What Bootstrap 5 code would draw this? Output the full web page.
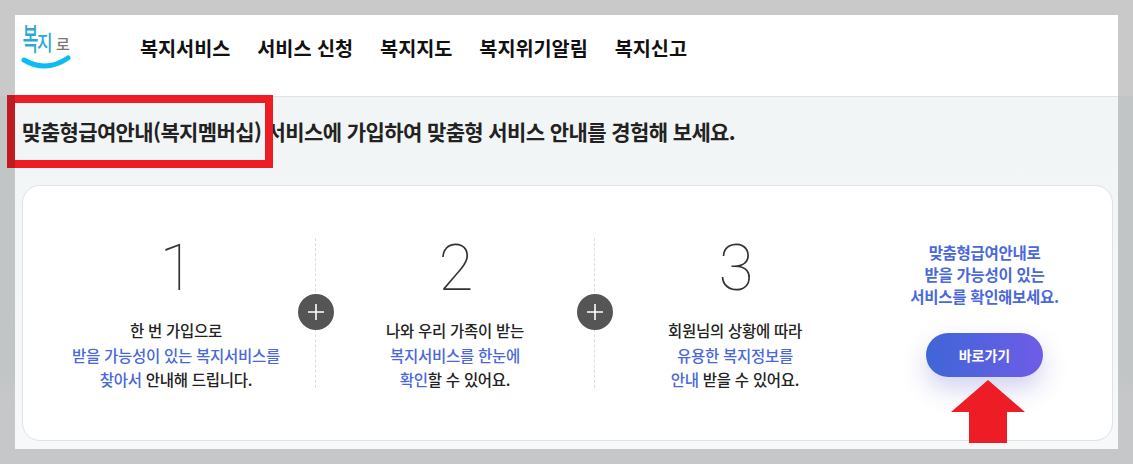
<!DOCTYPE html>
<html lang="ko">
<head>
<meta charset="utf-8">
<title>복지로</title>
<link href="https://cdn.jsdelivr.net/npm/bootstrap@5.3.0/dist/css/bootstrap.min.css" rel="stylesheet">
<style>
html,body{height:100%}
body{background:linear-gradient(#c9c9c9 0,#c9c9c9 96px,#c1c5c6 96px,#c1c5c6 370px,#c6c7c8 400px);font-family:"Noto Sans CJK KR","Noto Sans",sans-serif;padding:15px;overflow:hidden;position:relative}
.sheet{width:1103px;height:434px;background:linear-gradient(#f1f4f5,#f6f8f9)}
.topbar{height:82px;background:#fff;border-bottom:1px solid #dfe3e4;padding-left:125px;padding-top:17px}
.logo-box{position:absolute;left:19px;top:22px;width:58px;height:50px;overflow:visible}
.logo-box text{font-family:"Noto Sans CJK KR",sans-serif;font-weight:500}
.menu-link{font-size:19.7px;font-weight:700;color:#111;text-decoration:none;letter-spacing:-.05px;line-height:32px}
.menu-gap{gap:27px}
.headline{font-size:21px;font-weight:700;color:#222;letter-spacing:-.6px;margin:0;padding:19px 0 0 7px;line-height:30px;height:88px}
.panel{width:1091px;height:256px;margin-left:7px;background:#fff;border:1px solid #dfe3e4;border-radius:18px;display:grid;grid-template-columns:293px 279px 280px 1fr;padding-top:52px}
.step{height:150px;position:relative;border-right:1px dashed #dcdcdc;text-align:center;font-size:15.5px;font-weight:500;line-height:24.5px;color:#222;letter-spacing:-.28px}
.step:first-child{padding-left:14px}
.step-last{border-right:0}
.digit{font-family:Roboto,sans-serif;font-weight:100;font-size:64px;line-height:58px;color:#333;letter-spacing:0;margin-top:2px;margin-bottom:20px;padding-left:2px}
.accent{color:#4a68dc}
.joiner{position:absolute;right:-19px;top:56px;width:36px;height:36px;border-radius:50%;background:#555;display:flex;align-items:center;justify-content:center}
.promo{text-align:center;padding-top:3px;padding-right:18px;font-size:15.5px;font-weight:700;line-height:22px;color:#4a68dc;letter-spacing:-.3px}
.go-btn{display:block;margin:26px auto 0;width:117px;height:44px;line-height:44px;border:0;border-radius:22px;background:linear-gradient(90deg,#3f66d6,#6f5ce8);color:#fff;font-size:14px;font-weight:700;padding:0;box-shadow:0 12px 24px rgba(80,80,200,.25)}
.callout{position:absolute;left:7px;top:95px;width:266px;height:73px;border:8px solid #ee1c25}
.callout::before{content:"";position:absolute;left:-8px;top:-8px;width:8px;height:73px;background:#bf1a20}
.arrow-mark{position:absolute;left:951px;top:380px;width:74px;height:63px}
</style>
</head>
<body>
<div class="sheet">
  <header class="topbar">
    <nav class="d-flex menu-gap">
      <a class="menu-link" href="#">복지서비스</a>
      <a class="menu-link" href="#">서비스 신청</a>
      <a class="menu-link" href="#">복지지도</a>
      <a class="menu-link" href="#">복지위기알림</a>
      <a class="menu-link" href="#">복지신고</a>
    </nav>
  </header>
  <h1 class="headline">맞춤형급여안내(복지멤버십) 서비스에 가입하여 맞춤형 서비스 안내를 경험해 보세요.</h1>
  <section class="panel">
    <div class="step">
      <div class="digit">1</div>
      <div>한 번 가입으로</div>
      <div class="accent">받을 가능성이 있는 복지서비스를</div>
      <div><span class="accent">찾아서</span> 안내해 드립니다.</div>
      <span class="joiner"><svg width="18" height="18" viewBox="0 0 18 18"><path d="M9 1v16M1 9h16" stroke="#fff" stroke-width="1.6"/></svg></span>
    </div>
    <div class="step">
      <div class="digit">2</div>
      <div>나와 우리 가족이 받는</div>
      <div class="accent">복지서비스를 한눈에</div>
      <div><span class="accent">확인</span>할 수 있어요.</div>
      <span class="joiner"><svg width="18" height="18" viewBox="0 0 18 18"><path d="M9 1v16M1 9h16" stroke="#fff" stroke-width="1.6"/></svg></span>
    </div>
    <div class="step step-last">
      <div class="digit">3</div>
      <div>회원님의 상황에 따라</div>
      <div class="accent">유용한 복지정보를</div>
      <div><span class="accent">안내</span> 받을 수 있어요.</div>
    </div>
    <div class="promo">
      <div>맞춤형급여안내로</div>
      <div>받을 가능성이 있는</div>
      <div>서비스를 확인해보세요.</div>
      <button class="go-btn" type="button">바로가기</button>
    </div>
  </section>
</div>
<svg class="logo-box" viewBox="0 0 58 50">
  <text font-size="29" fill="#2aa9d8" transform="translate(3.5 28) scale(.6 1.05)">복</text>
  <text font-size="20" fill="#2aa9d8" transform="translate(18 28) scale(.85 1.05)">지</text>
  <text font-size="15" fill="#777" transform="translate(37 28) scale(1 1)">로</text>
  <path d="M5 38Q27 51 49 36" fill="none" stroke="#0dbdf2" stroke-width="5" stroke-linecap="round"/>
</svg>
<div class="callout"></div>
<svg class="arrow-mark" viewBox="0 0 74 63"><path d="M37 0 74 32H56V63H18V32H0Z" fill="#ee1c25"/></svg>
</body>
</html>
